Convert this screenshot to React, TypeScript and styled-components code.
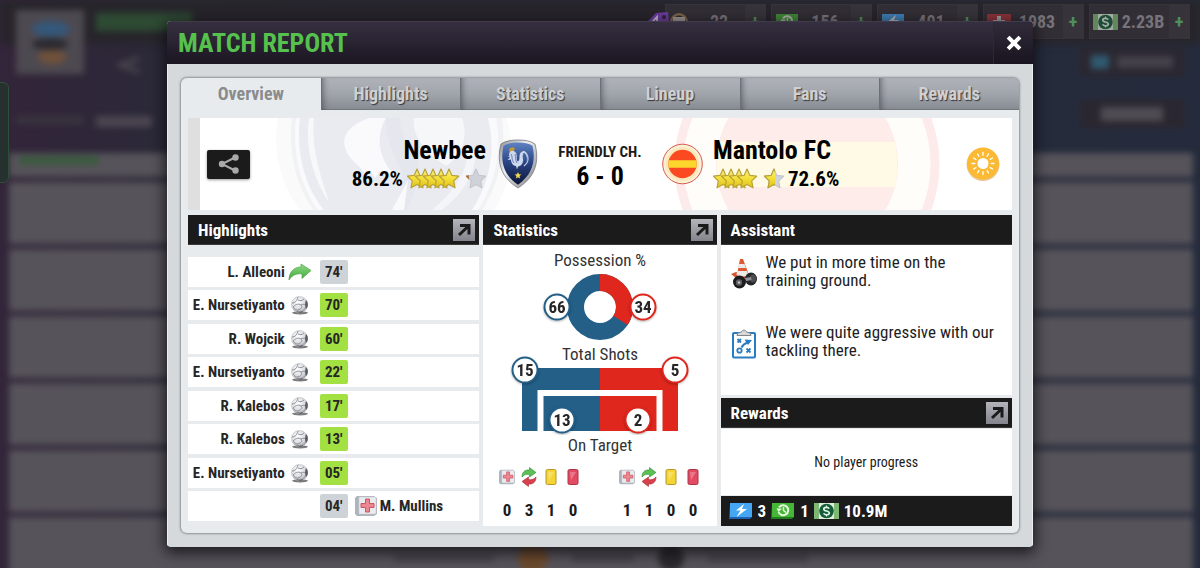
import React from "react";
import styled, { createGlobalStyle, css } from "styled-components";

const GlobalStyle = createGlobalStyle`
  *, *::before, *::after { box-sizing: border-box; }
  body {
    margin: 0;
    background: #26232c;
    color: #1b1b1b;
    font-family: "Roboto Condensed", Roboto, "Liberation Sans", sans-serif;
    font-size: 15px;
  }
  button { font: inherit; border: 0; padding: 0; cursor: pointer; }
  h1, h2, h3, p, ul, ol, dl, dd, dt { margin: 0; padding: 0; }
  ul, ol { list-style: none; }
  svg { display: block; flex: none; }
`;

/* ---------- page behind the dialog ---------- */

const Page = styled.div`
  position: relative;
  min-height: 100vh;
  overflow: hidden;
`;

const Backdrop = styled.div`
  position: absolute;
  inset: 0;
  overflow: hidden;
  background: linear-gradient(90deg, #33253a 0, #2b2938 14%, #272a3a 60%, #252b3c 100%);
`;

const BlurLayer = styled.div`
  filter: blur(3px);
  display: flex;
  flex-direction: column;
`;

const BackHeader = styled.div`
  height: 153px;
  padding: 10px 16px 0;
  display: flex;
  justify-content: space-between;
  background: linear-gradient(180deg, #27252b 0, #27252b 40px, transparent 48px);
`;

const BackClub = styled.div`
  display: grid;
  grid-template-columns: 68px 100px;
  grid-template-rows: 64px auto;
  gap: 42px 12px;
`;

const BackLogo = styled.div`
  display: grid;
  place-items: center;
  background: #4d4950;
`;

const BackLines = styled.div`
  display: flex;
  flex-direction: column;
  gap: 26px;
  padding-top: 3px;
`;

const BackArrow = styled.svg`
  margin-left: 18px;
`;

const Smudge = styled.span<{ $w: number; $h: number; $c: string; $round?: boolean }>`
  display: block;
  width: ${(p) => p.$w}px;
  height: ${(p) => p.$h}px;
  border-radius: ${(p) => (p.$round ? "50%" : "0")};
  background: ${(p) => p.$c};
`;

const BackActions = styled.div`
  display: flex;
  flex-direction: column;
  gap: 24px;
  padding-top: 38px;
`;

const BackAction = styled.div`
  width: 104px;
  height: 28px;
  display: flex;
  align-items: center;
  justify-content: center;
  gap: 8px;
  background: #2b2730;
`;

const BackRows = styled.div`
  display: flex;
  flex-direction: column;
  gap: 5px;
  padding: 0 7px 0 9px;
`;

const BackRow = styled.div<{ $short?: boolean }>`
  height: ${(p) => (p.$short ? 24 : 62)}px;
  padding: 3px 10px;
  background: #56535a;
`;

const BackScoreRow = styled(BackRow)`
  display: flex;
  align-items: center;
  justify-content: center;
  gap: 24px;
  padding-top: 22px;
`;

const SideHandle = styled.div`
  position: absolute;
  left: -8px;
  top: 82px;
  width: 17px;
  height: 101px;
  border: 1px solid #2f5038;
  border-radius: 6px;
  background: #26302e;
`;

const Wallet = styled.ul`
  position: absolute;
  top: 4px;
  right: 10px;
  display: flex;
  gap: 5px;
`;

const WalletItem = styled.li`
  position: relative;
  width: 101px;
  height: 35px;
  display: flex;
  align-items: center;
  background: #322e35;
  color: #77737a;
  font-size: 18px;
  font-weight: 700;
  border: 1px solid #37333a;
`;

const WalletIcon = styled.span`
  width: 24px;
  margin-left: 3px;
  opacity: 0.65;
`;

const WalletTag = styled.span`
  position: absolute;
  left: -22px;
  top: 5px;
`;

const WalletValue = styled.span`
  flex: 1;
  text-align: center;
`;

const WalletAdd = styled.button`
  width: 20px;
  height: 33px;
  background: #37333a;
  color: #4f8f5e;
  font-size: 18px;
  font-weight: 700;
`;

/* ---------- dialog ---------- */

const Overlay = styled.div`
  position: relative;
  display: flex;
  justify-content: center;
  padding: 21px 16px 22px;
`;

const Dialog = styled.section`
  width: 100%;
  max-width: 866px;
  border-radius: 4px;
  background: #d5d9dc;
  box-shadow: 0 4px 14px 2px rgba(10, 8, 14, 0.75);
  overflow: hidden;
`;

const TitleBar = styled.header`
  height: 43px;
  padding-left: 11px;
  display: flex;
  align-items: center;
  justify-content: space-between;
  background: linear-gradient(180deg, #352f3f 0, #2a2433 45%, #1c1623 100%);
  border-top: 1px solid #403a4a;
`;

const Title = styled.h1`
  color: #56c14c;
  font-size: 26px;
  line-height: 42px;
  font-weight: 700;
`;

const CloseButton = styled.button`
  width: 40px;
  height: 42px;
  display: grid;
  place-items: center;
  background: rgba(0, 0, 0, 0.08);
  border-left: 1px solid #2d2736;
`;

const DialogBody = styled.div`
  padding: 14px;
  box-shadow: inset 1px 0 #eceff1, inset -1px 0 #eceff1;
`;

const Panel = styled.div`
  border-radius: 6px;
  background: #e8ebed;
  box-shadow: 0 0 2px 1px rgba(110, 115, 122, 0.7);
  overflow: hidden;
`;

const Tabs = styled.div`
  display: flex;
  background: #8b8f96;
`;

const Tab = styled.button<{ $active?: boolean }>`
  flex: 1;
  height: 32px;
  font-size: 18px;
  line-height: 32px;
  font-weight: 700;
  ${(p) =>
    p.$active
      ? css`
          background: #e8ebed;
          color: #8a8b8d;
        `
      : css`
          background: linear-gradient(180deg, #b0b3ba 0, #a0a4ab 50%, #868a91 100%);
          color: #cfd0d2;
          text-shadow: 1px 1px 1px #35373b;
          box-shadow: inset 1px 0 #6c7077, inset 7px 0 6px -5px rgba(40, 42, 48, 0.55),
            inset 0 -1px #777b82;
        `}
`;

const PanelContent = styled.div`
  padding: 8px 7px 7px;
  display: flex;
  flex-direction: column;
  gap: 5px;
`;

const Hero = styled.div`
  position: relative;
  height: 92px;
  padding: 0 12px 0 7px;
  display: grid;
  grid-template-columns: 43px minmax(0, 1fr) auto minmax(0, 1fr) 50px;
  align-items: center;
  border-left: 12px solid #dfdfdf;
  background: #fff;
`;

const HeroArt = styled.svg`
  position: absolute;
  inset: 0;
  width: 100%;
  height: 100%;
`;

const ShareButton = styled.button`
  position: relative;
  height: 29px;
  display: grid;
  place-items: center;
  border-radius: 2px;
  background: #1b1b1b;
  box-shadow: 0 1px 3px rgba(0, 0, 0, 0.4);
`;

const Team = styled.div<{ $away?: boolean }>`
  position: relative;
  display: flex;
  align-items: center;
  flex-direction: ${(p) => (p.$away ? "row-reverse" : "row")};
  justify-content: flex-end;
  gap: ${(p) => (p.$away ? 10 : 12)}px;
`;

const TeamText = styled.div<{ $away?: boolean }>`
  display: flex;
  flex-direction: column;
  align-items: ${(p) => (p.$away ? "flex-start" : "flex-end")};
`;

const TeamName = styled.h2`
  color: #000;
  font-size: 26px;
  line-height: 30px;
  font-weight: 700;
  white-space: nowrap;
`;

const Rating = styled.div`
  display: flex;
  align-items: center;
  gap: 4px;
  height: 28px;
  color: #000;
  font-size: 21px;
  font-weight: 700;
`;

const Score = styled.div`
  position: relative;
  min-width: 84px;
  margin: 0 20px;
  text-align: center;
  font-weight: 700;
  line-height: 24px;
`;

const Competition = styled.p`
  font-size: 15px;
`;

const Result = styled.p`
  color: #000;
  font-size: 26px;
`;

const Weather = styled.div`
  position: relative;
  justify-self: end;
`;

const Columns = styled.div`
  display: grid;
  grid-template-columns: minmax(0, 5fr) minmax(0, 4fr) minmax(0, 5fr);
  gap: 4px;
`;

const Column = styled.section`
  display: flex;
  flex-direction: column;
`;

const SectionHead = styled.header`
  height: 30px;
  padding: 0 4px 0 10px;
  display: flex;
  align-items: center;
  justify-content: space-between;
  background: #1b1b1b;
  border-bottom: 1px solid #3a3a3a;
`;

const SectionTitle = styled.h3`
  color: #fff;
  font-size: 17px;
  font-weight: 700;
`;

const OpenButton = styled.button`
  width: 22px;
  height: 22px;
  display: grid;
  place-items: center;
  background: linear-gradient(180deg, #b4b5bb, #84858c);
`;

const EventList = styled.ol`
  height: 264px;
  margin: 12px 0 4px;
  display: flex;
  flex-direction: column;
  justify-content: space-between;
`;

const EventRow = styled.li`
  height: 30px;
  display: grid;
  grid-template-columns: minmax(0, 1fr) 28px minmax(0, 1fr);
  align-items: center;
  gap: 7px;
  background: #fff;
  font-weight: 700;
  color: #262626;
  white-space: nowrap;
`;

const EventSide = styled.div<{ $end?: boolean }>`
  display: flex;
  align-items: center;
  justify-content: ${(p) => (p.$end ? "flex-end" : "flex-start")};
  gap: 3px;
`;

const Minute = styled.span<{ $goal?: boolean }>`
  height: 24px;
  line-height: 24px;
  text-align: center;
  border-radius: 2px;
  background: ${(p) => (p.$goal ? "#a3e041" : "#ced3d7")};
`;

const StatsBody = styled.div`
  flex: 1;
  padding-top: 5px;
  display: flex;
  flex-direction: column;
  align-items: center;
  background: #fff;
`;

const StatLabel = styled.h4`
  margin: 0;
  font-size: 17px;
  line-height: 20px;
  font-weight: 400;
  color: #333;
`;

const Donut = styled.svg`
  margin: 2px 0;
`;

const Goal = styled.svg`
  margin-top: -8px;
`;

const CountGroups = styled.div`
  margin-top: 12px;
  display: flex;
  gap: 32px;
`;

const CountGroup = styled.dl`
  display: grid;
  grid-template-columns: repeat(4, 22px);
`;

const Count = styled.div`
  display: flex;
  flex-direction: column;
  align-items: center;
  gap: 13px;
  font-size: 17px;
  line-height: 20px;
  font-weight: 700;
`;

const CountIcon = styled.dt`
  height: 20px;
  display: grid;
  place-items: center;
`;

const NoteList = styled.ul`
  height: 150px;
  padding: 8px 15px 0 10px;
  display: flex;
  flex-direction: column;
  gap: 34px;
  background: #fff;
`;

const Note = styled.li`
  display: flex;
  gap: 9px;
  align-items: flex-start;
`;

const NoteIcon = styled.span`
  width: 26px;
  padding-top: 6px;
`;

const NoteText = styled.p`
  flex: 1;
  font-size: 17px;
  line-height: 18px;
  color: #1d1d1d;
`;

const RewardsSection = styled.section`
  margin-top: 3px;
  display: flex;
  flex-direction: column;
`;

const Progress = styled.p`
  height: 66px;
  font-size: 14px;
  line-height: 66px;
  margin: 1px 0;
  text-align: center;
  background: #fff;
`;

const Earnings = styled.ul`
  height: 30px;
  padding: 0 8px;
  display: flex;
  align-items: center;
  gap: 5px;
  background: #1b1b1b;
  color: #fff;
  font-size: 17px;
  font-weight: 700;
`;

const Earning = styled.li`
  display: flex;
  align-items: center;
  gap: 5px;
`;

/* ---------- drawings ---------- */

const STAR =
  "M10 1 L12.9 7.4 L19.6 8.2 L14.7 12.9 L16 19.8 L10 16.4 L4 19.8 L5.3 12.9 L0.4 8.2 L7.1 7.4 Z";

function Stars({ full, rest }: { full: number; rest: number }) {
  const last = full * 8 + 19;
  const id = `rest${full}`;
  return (
    <svg width={last + 20} height="22" viewBox={`0 0 ${last + 20} 22`} aria-hidden="true">
      <defs>
        <linearGradient id={`${id}g`} x1="0" y1="0" x2="0" y2="1">
          <stop offset="0" stopColor="#f0ee9a" />
          <stop offset="0.45" stopColor="#f6e23c" />
          <stop offset="1" stopColor="#e0c01c" />
        </linearGradient>
        <clipPath id={id}>
          <rect x="0" y="0" width={20 * rest} height="22" />
        </clipPath>
      </defs>
      {Array.from({ length: full }, (_, i) => (
        <path
          key={i}
          d={STAR}
          transform={`translate(${i * 8} 0)`}
          fill={`url(#${id}g)`}
          stroke="#b9a236"
          strokeWidth="1.2"
          strokeLinejoin="round"
        />
      ))}
      <g transform={`translate(${last} 0)`}>
        <path d={STAR} fill="#d0d2da" stroke="#c4c6ce" strokeWidth="1.2" strokeLinejoin="round" />
        <path
          d={STAR}
          fill={rest > 0.3 ? `url(#${id}g)` : "#b98a4e"}
          stroke={rest > 0.3 ? "#b9a236" : "#a9743e"}
          strokeWidth="1.2"
          strokeLinejoin="round"
          clipPath={`url(#${id})`}
        />
      </g>
    </svg>
  );
}

const Shield = () => (
  <svg width="40" height="50" viewBox="0 0 40 50" role="img" aria-label="Newbee crest">
    <defs>
      <linearGradient id="shieldRim" x1="0" y1="0" x2="1" y2="1">
        <stop offset="0" stopColor="#8b8d93" />
        <stop offset="0.4" stopColor="#eeeff1" />
        <stop offset="1" stopColor="#77797f" />
      </linearGradient>
      <linearGradient id="shieldFill" x1="0" y1="0" x2="0" y2="1">
        <stop offset="0" stopColor="#5f82c2" />
        <stop offset="0.45" stopColor="#2c4788" />
        <stop offset="1" stopColor="#0b1438" />
      </linearGradient>
    </defs>
    <path
      d="M20 1c7 0 13 1 17 4 4 16 2 32-17 44C1 37-1 21 3 5 7 2 13 1 20 1z"
      fill="url(#shieldRim)"
      stroke="#77797f"
      strokeWidth="0.8"
    />
    <path
      d="M20 3.500c6 0 11 1 14.500 3.200 3 13 1.500 28-14.500 39C4 35 2.500 20 5.500 6.700 9 4.500 14 3.500 20 3.500z"
      fill="url(#shieldFill)"
    />
    <path d="M11 12c0-3 2-4 4-3.500 2-.5 2 1.500 1 3l-3 2z" fill="#c79a2d" />
    <path
      d="M11 15c1-4 5-4 7-1 1.500 3 0 6 1.500 8 1 1 2-1 2-4 0-4 2-6 5-6 3 2 4 7 2 11 1-4 0-7-2-9-2 1-2 3-1.500 6 .5 4-1.500 7-5 7.500l-1 3-1-3.500c-3 0-5-3-5-6.500l-3.500.5 2.500-2.500-2-1 2-.5c-1 0-1-1-1-2z"
      fill="#cfd9ec"
    />
    <path d="M13 15c2 3 0 5 3 9M17 15c1 3 0 6 2 9M25 14c1 3 2 5 0 9" stroke="#4d69a8" strokeWidth="0.8" fill="none" />
    <path d="M28 14c3 4 3 9-2 13" stroke="#b9c7e2" strokeWidth="1.300" fill="none" />
    <path
      d="M20 33l1 2.300 2.400.2-1.900 1.600.7 2.400-2.200-1.300-2.200 1.300.7-2.400-1.900-1.600 2.400-.2z"
      fill="#f5da4a"
    />
  </svg>
);

const RoundCrest = () => (
  <svg width="41" height="42" viewBox="0 0 41 42" role="img" aria-label="Mantolo FC crest">
    <circle cx="20.500" cy="21" r="19.800" fill="#fbf0d3" stroke="#d8584e" strokeWidth="1" />
    <circle cx="20.500" cy="21" r="17" fill="#f9e8bc" />
    <circle cx="20.500" cy="21" r="14.200" fill="#fb4a22" />
    <path d="M6.800 17.300h27.400a14.200 14.200 0 0 1 0 7.400H6.800a14.200 14.200 0 0 1 0-7.400z" fill="#fcd62c" />
  </svg>
);

const HeroBackground = () => (
  <HeroArt viewBox="0 0 812 92" preserveAspectRatio="xMidYMid slice" aria-hidden="true">
    <path d="M78 0C72 34 82 70 100 92H294C312 66 316 26 306 0Z" fill="#fafafb" />
    <path d="M92 0C88 34 96 70 114 92H282C300 64 306 32 302 0Z" fill="#f1f2f4" />
    <path d="M96 0C92 34 100 68 118 92H278C296 64 302 32 296 0Z" fill="#fafafc" />
    <path d="M100 0C96 34 104 68 124 92H272C290 64 296 32 288 0Z" fill="#e9ebf0" />
    <path d="M114 0h-5c-4 30 4 60 20 84-8-26-18-52-15-84z" fill="#f8f8fa" />
    <path
      d="M170 0C150 6 140 18 146 32C150 44 162 48 166 58L170 52L175 60L180 53L196 58C180 44 174 20 186 0Z"
      fill="#fafafc"
    />
    <path d="M214 0C212 16 222 32 246 48C264 36 268 16 262 0Z" fill="#f6f7f9" />
    <path d="M186 0c0 20 6 34 14 50 6 14 4 28-2 42h8c12-22 18-40 8-56-10-14-14-24-14-36z" fill="#e4e7ed" />
    <path d="M192 92l16-30-4 30z" fill="#fafafc" />
    <path d="M268 30c0 24-14 44-36 62h10c22-18 34-36 34-62z" fill="#f4f5f8" />
    <circle cx="607" cy="46" r="128" fill="#fffdf9" stroke="#fdeaea" strokeWidth="9" />
    <circle cx="607" cy="46" r="91" fill="#fdece9" />
    <path d="M519 24h176c3 15 3 30 0 45H519c-3-15-3-30 0-45z" fill="#fffae5" />
  </HeroArt>
);

const CloseIcon = () => (
  <svg width="16" height="16" viewBox="0 0 16 16" aria-hidden="true">
    <path d="M3.500 3.500l9 9M12.500 3.500l-9 9" stroke="#fff" strokeWidth="4" strokeLinecap="square" />
  </svg>
);

const ShareIcon = () => (
  <svg width="22" height="20" viewBox="0 0 22 20" aria-hidden="true">
    <path d="M17 3.500L4 10l13 6.500" fill="none" stroke="#aaa" strokeWidth="2" />
    <circle cx="17.500" cy="3.500" r="3.200" fill="#aaa" />
    <circle cx="4" cy="10" r="3.200" fill="#aaa" />
    <circle cx="17.500" cy="16.500" r="3.200" fill="#aaa" />
  </svg>
);

const SunIcon = () => (
  <svg width="34" height="34" viewBox="0 0 34 34" role="img" aria-label="Sunny">
    <circle cx="17" cy="17.500" r="16.500" fill="#d8a24a" opacity="0.6" />
    <circle cx="17" cy="16.500" r="16" fill="#fbb934" />
    <circle cx="17" cy="16.500" r="5.500" fill="#fff" />
    {Array.from({ length: 12 }, (_, i) => (
      <path
        key={i}
        d="M17 5.500v2.800"
        stroke="#fff"
        strokeWidth="1.300"
        strokeLinecap="round"
        transform={`rotate(${i * 30} 17 16.500)`}
      />
    ))}
  </svg>
);

const OpenIcon = () => (
  <svg width="14" height="14" viewBox="0 0 14 14" aria-hidden="true">
    <path d="M3 2.500h9v9M11 3.500L2 12" fill="none" stroke="#1b1b1b" strokeWidth="3" />
  </svg>
);

const BallIcon = () => (
  <svg width="25" height="20" viewBox="0 0 25 20" role="img" aria-label="Goal">
    <defs>
      <radialGradient id="ballFill" cx="0.4" cy="0.35" r="0.7">
        <stop offset="0" stopColor="#ffffff" />
        <stop offset="0.7" stopColor="#d5d7dc" />
        <stop offset="1" stopColor="#85878e" />
      </radialGradient>
    </defs>
    <ellipse cx="12" cy="17.800" rx="8" ry="1.600" fill="#444" opacity="0.7" />
    <circle cx="11.500" cy="9.500" r="8" fill="url(#ballFill)" stroke="#b5b7be" strokeWidth="0.6" />
    <path
      d="M4 8c3 0 5-2 6-6M10 5c2 1 4 1 6-1M5 12c2-2 5-4 8-2 2 2 0 4-3 5-2 0-4-1-5-3zM13 10c2-1 4-1 5 0"
      fill="none"
      stroke="#84868e"
      strokeWidth="0.9"
    />
    <path d="M18 5c2.500 2 2.500 7 0 9-1.200-3-1.200-6 0-9z" fill="#5a5c64" />
    <path d="M8 16c2 1 5 1 7 0l-1 1.400c-2 .5-4 .4-6-1.400z" fill="#55575e" />
  </svg>
);

const SubIcon = () => (
  <svg width="25" height="20" viewBox="0 0 25 20" role="img" aria-label="Substitution">
    <defs>
      <linearGradient id="subFill" x1="0" y1="0" x2="0" y2="1">
        <stop offset="0" stopColor="#8fdc84" />
        <stop offset="1" stopColor="#3fa63c" />
      </linearGradient>
    </defs>
    <path
      d="M1 18C1 10 6 5 13 5V2l10 6.500-9 8V12C9 11 4 13 1 18z"
      fill="url(#subFill)"
      stroke="#4fa548"
      strokeWidth="0.7"
    />
  </svg>
);

const KitIcon = ({ size }: { size: number }) => (
  <svg width={size} height={size} viewBox="0 0 22 22" role="img" aria-label="Injury">
    <path d="M2 1h17l3 2v16l-3 2H2l-2-2V3z" fill="#aeb4bd" />
    <path d="M4 2h16l1 1v15l-1 1H4z" fill="#e9ebef" stroke="#c9ccd3" strokeWidth="0.6" />
    <path d="M10.500 4h4v4.500H19v4h-4.500V17h-4v-4.500H6v-4h4.500z" fill="#ea8790" stroke="#d4525e" />
  </svg>
);

const SwapIcon = () => (
  <svg width="16" height="20" viewBox="0 0 16 20" role="img" aria-label="Substitutions">
    <path d="M1 10c0-5 3-7.500 7.500-7V.5L15 5.500 8.500 10V7.500C5.500 7 3 7.500 1 10z" fill="#5cc056" stroke="#2f8a33" strokeWidth="0.6" />
    <path d="M15 10c0 5-3 7.500-7.500 7v2.500L1 14.500 7.500 10v2.500c3 .5 5.500 0 7.500-2.500z" fill="#d8404b" stroke="#a52934" strokeWidth="0.6" />
  </svg>
);

const CardIcon = ({ red }: { red?: boolean }) => (
  <svg width="12" height="16" viewBox="0 0 12 16" role="img" aria-label={red ? "Red cards" : "Yellow cards"}>
    <rect x="1" y="0.500" width="10" height="15" rx="1.500" fill={red ? "#e24a62" : "#f4d534"} stroke={red ? "#ab3346" : "#b4962a"} />
    <path d="M3 3h6L4 11z" fill="#fff" opacity="0.25" />
  </svg>
);

const BoltIcon = () => (
  <svg width="24" height="16" viewBox="0 0 24 16" role="img" aria-label="Condition">
    <path d="M1 1h22v13l-2 2H0z" fill="#1f62b4" />
    <rect x="1" y="0" width="22" height="14" fill="#45a7f4" />
    <path d="M15 1L7 7.500h4.500L7.500 14 18 6h-5z" fill="#fff" />
  </svg>
);

const RestIcon = () => (
  <svg width="24" height="16" viewBox="0 0 24 16" role="img" aria-label="Rest">
    <path d="M1 1h22v13l-2 2H0z" fill="#1f7f1c" />
    <rect x="1" y="0" width="22" height="14" fill="#46b636" />
    <path d="M8 4.500a5 5 0 1 1-.5 4.500" fill="none" stroke="#e9f8e4" strokeWidth="2" />
    <path d="M5.500 5.500h5.500L7.500 9z" fill="#e9f8e4" />
    <path d="M12.500 4v3.500l2.500 2" fill="none" stroke="#e9f8e4" strokeWidth="1.500" />
  </svg>
);

const CashIcon = () => (
  <svg width="25" height="16" viewBox="0 0 25 16" role="img" aria-label="Cash">
    <rect width="25" height="16" fill="#7fb873" />
    <rect x="5" width="15" height="16" fill="#dfeed8" />
    <circle cx="12.500" cy="8" r="7.300" fill="#135c3c" />
    <path
      d="M15.200 5.600C14 3.800 9.800 4 9.800 6.200c0 2.300 5.500 1.400 5.500 3.800 0 2.200-4.500 2.400-5.700.4"
      fill="none"
      stroke="#e4f3e2"
      strokeWidth="1.700"
    />
    <path d="M12.500 2.500v2M12.500 11.500v2" stroke="#e4f3e2" strokeWidth="1.200" />
  </svg>
);

const MedIcon = () => (
  <svg width="24" height="16" viewBox="0 0 24 16" role="img" aria-label="Treatments">
    <rect width="24" height="16" rx="1" fill="#b8353c" />
    <path d="M10 2h4v4h4v4h-4v4h-4v-4H6V6h4z" fill="#d9d5d8" />
  </svg>
);

const CoinIcon = () => (
  <svg width="20" height="20" viewBox="0 0 20 20" role="img" aria-label="Tokens">
    <circle cx="10" cy="10" r="9" fill="#9c8057" />
    <circle cx="10" cy="10" r="6.500" fill="#33271f" />
    <path d="M4 5h12v4H4z" fill="#d3cdc6" />
  </svg>
);

const TagIcon = () => (
  <svg width="26" height="22" viewBox="0 0 26 22" aria-hidden="true">
    <path d="M0 15L12 3l12-1 1 9-10 9z" fill="#6b3b9c" />
    <circle cx="20" cy="7" r="2" fill="#2c2433" />
    <path d="M13 15V7l-5 5h7" fill="none" stroke="#c2b5d0" strokeWidth="1.800" />
  </svg>
);

const ConeIcon = () => (
  <svg width="26" height="30" viewBox="0 0 26 30" aria-hidden="true">
    <path d="M0 15l5-2 14 2-3 5-11-1z" fill="#d9532b" />
    <path d="M9 0h3l6 16c-4 2-8 2-12 0z" fill="#e0582f" />
    <path d="M8 5h5.500l1.500 4H6.800zM6 12h10l1.500 4c-4 2-8 2-12 0z" fill="#ece9e6" />
    <ellipse cx="20" cy="20" rx="6" ry="6.500" fill="#262628" />
    <ellipse cx="22" cy="19.500" rx="3" ry="4" fill="#4c4d50" />
    <path d="M8 20l12-2 .5 3-12 2.500z" fill="#8f9196" />
    <circle cx="8.500" cy="23" r="6.500" fill="#1c1c1e" />
    <circle cx="8" cy="23.500" r="3.200" fill="#5c5d61" />
    <circle cx="8" cy="23.500" r="1.300" fill="#bfc0c3" />
  </svg>
);

const TacticsIcon = () => (
  <svg width="26" height="30" viewBox="0 0 26 30" aria-hidden="true">
    <rect x="2" y="4" width="22" height="24.500" rx="1" fill="#fff" stroke="#2a7cc0" strokeWidth="2" />
    <path d="M6 6.500c0-3 3-3 4.500-3.500C11 .5 15 .5 15.500 3 17 3.500 20 3.500 20 6.500z" fill="#d7d8da" stroke="#77797d" strokeWidth="0.900" />
    <path d="M6.500 10l3.500 3.500M10 10l-3.500 3.500M15.500 19.500l4 4M19.500 19.500l-4 4" stroke="#2a7cc0" strokeWidth="1.800" />
    <circle cx="8.500" cy="21.500" r="2.200" fill="none" stroke="#2a7cc0" strokeWidth="1.800" />
    <path d="M10.500 18.500c1-2 3-4 6-5" fill="none" stroke="#2a7cc0" strokeWidth="2" />
    <path d="M13.500 10.500l7.500.5-4 5z" fill="#2a7cc0" />
  </svg>
);

const BLUE = "#235f87";
const RED = "#df271d";

const ChartBadge = ({ x, y, value, color }: { x: number; y: number; value: number; color: string }) => (
  <g filter="drop-shadow(0 1px 1px rgba(0,0,0,0.3))">
    <circle cx={x} cy={y} r="12.500" fill="#fff" stroke={color} strokeWidth="2" />
    <text x={x} y={y + 6} textAnchor="middle" fontSize="17" fontWeight="700" fill="#262626">
      {value}
    </text>
  </g>
);

function PossessionChart({ home, away }: { home: number; away: number }) {
  const circumference = 2 * Math.PI * 24.5;
  const awayLength = (circumference * away) / (home + away);
  return (
    <Donut width="116" height="70" viewBox="0 0 116 70" role="img" aria-label="Possession">
      <circle cx="58" cy="35" r="24.500" fill="none" stroke={BLUE} strokeWidth="17" />
      <circle
        cx="58"
        cy="35"
        r="24.500"
        fill="none"
        stroke={RED}
        strokeWidth="17"
        strokeDasharray={`${awayLength} ${circumference}`}
        transform="rotate(-90 58 35)"
      />
      <ChartBadge x={15} y={35} value={home} color={BLUE} />
      <ChartBadge x={101} y={35} value={away} color={RED} />
    </Donut>
  );
}

const ShotsChart = () => (
  <Goal width="180" height="79" viewBox="0 0 180 79" role="img" aria-label="Shots">
    <path d="M12 12h78v63H12z" fill={BLUE} />
    <path d="M90 12h78v63H90z" fill={RED} />
    <path d="M30.500 75V37h119v38" fill="none" stroke="#fff" strokeWidth="6" />
    <ChartBadge x={15} y={14} value={15} color={BLUE} />
    <ChartBadge x={165} y={14} value={5} color={RED} />
    <ChartBadge x={52} y={64} value={13} color={BLUE} />
    <ChartBadge x={128} y={64} value={2} color={RED} />
  </Goal>
);

/* ---------- data ---------- */

type MatchEvent = { minute: string; player: string; kind: "goal" | "sub" | "injury"; away?: boolean };

const EVENTS: MatchEvent[] = [
  { minute: "74'", player: "L. Alleoni", kind: "sub" },
  { minute: "70'", player: "E. Nursetiyanto", kind: "goal" },
  { minute: "60'", player: "R. Wojcik", kind: "goal" },
  { minute: "22'", player: "E. Nursetiyanto", kind: "goal" },
  { minute: "17'", player: "R. Kalebos", kind: "goal" },
  { minute: "13'", player: "R. Kalebos", kind: "goal" },
  { minute: "05'", player: "E. Nursetiyanto", kind: "goal" },
  { minute: "04'", player: "M. Mullins", kind: "injury", away: true },
];

const EVENT_ICONS = {
  goal: <BallIcon />,
  sub: <SubIcon />,
  injury: <KitIcon size={22} />,
};

const TABS = ["Overview", "Highlights", "Statistics", "Lineup", "Fans", "Rewards"];

const WALLET = [
  { icon: <CoinIcon />, value: "22", tag: true },
  { icon: <RestIcon />, value: "156" },
  { icon: <BoltIcon />, value: "401" },
  { icon: <MedIcon />, value: "1983" },
  { icon: <CashIcon />, value: "2.23B" },
];

const COUNTS = [
  [0, 3, 1, 0],
  [1, 1, 0, 0],
];

const COUNT_ICONS = [<KitIcon size={16} />, <SwapIcon />, <CardIcon />, <CardIcon red />];

function OpenSection({ label }: { label: string }) {
  return (
    <OpenButton type="button" aria-label={`Open ${label}`}>
      <OpenIcon />
    </OpenButton>
  );
}

export default function App() {
  return (
    <Page>
      <GlobalStyle />
      <Backdrop>
        <BlurLayer>
          <BackHeader>
            <BackClub>
              <BackLogo>
                <svg width="44" height="50" viewBox="0 0 44 50" aria-hidden="true">
                  <ellipse cx="23" cy="12" rx="19" ry="8" fill="#35577a" />
                  <ellipse cx="22" cy="27" rx="18" ry="6" fill="#2b2a30" />
                  <ellipse cx="24" cy="40" rx="14" ry="7" fill="#70513a" />
                </svg>
              </BackLogo>
              <BackLines>
                <Smudge $w={96} $h={18} $c="#2d4a33" />
                <BackArrow width="28" height="16" viewBox="0 0 28 16" aria-hidden="true">
                  <path d="M26 1L6 8l20 7" fill="none" stroke="#4a464e" strokeWidth="4" />
                </BackArrow>
              </BackLines>
              <Smudge $w={68} $h={8} $c="#39343f" />
              <Smudge $w={56} $h={11} $c="#4b4650" />
            </BackClub>
            <BackActions>
              <BackAction>
                <Smudge $w={18} $h={14} $c="#2f5a70" />
                <Smudge $w={56} $h={12} $c="#45414a" />
              </BackAction>
              <BackAction>
                <Smudge $w={62} $h={14} $c="#504c54" />
              </BackAction>
            </BackActions>
          </BackHeader>
          <BackRows>
            <BackRow $short>
              <Smudge $w={80} $h={9} $c="#3b5a3f" />
            </BackRow>
            <BackRow />
            <BackRow />
            <BackRow />
            <BackRow />
            <BackRow />
            <BackScoreRow>
              <Smudge $w={100} $h={8} $c="#47444b" />
              <Smudge $w={30} $h={30} $c="#6b4a2c" $round />
              <Smudge $w={62} $h={8} $c="#47444b" />
              <Smudge $w={26} $h={26} $c="#2b282e" $round />
              <Smudge $w={100} $h={8} $c="#47444b" />
            </BackScoreRow>
          </BackRows>
        </BlurLayer>
        <SideHandle />
        <Wallet>
          {WALLET.map((w) => (
            <WalletItem key={w.value}>
              {w.tag && (
                <WalletTag>
                  <TagIcon />
                </WalletTag>
              )}
              <WalletIcon>{w.icon}</WalletIcon>
              <WalletValue>{w.value}</WalletValue>
              <WalletAdd type="button" aria-label="Add">
                +
              </WalletAdd>
            </WalletItem>
          ))}
        </Wallet>
      </Backdrop>

      <Overlay>
        <Dialog role="dialog" aria-labelledby="report-title">
          <TitleBar>
            <Title id="report-title">MATCH REPORT</Title>
            <CloseButton type="button" aria-label="Close">
              <CloseIcon />
            </CloseButton>
          </TitleBar>
          <DialogBody>
            <Panel>
              <Tabs role="tablist">
                {TABS.map((t, i) => (
                  <Tab key={t} type="button" role="tab" aria-selected={i === 0} $active={i === 0}>
                    {t}
                  </Tab>
                ))}
              </Tabs>
              <PanelContent>
                <Hero>
                  <HeroBackground />
                  <ShareButton type="button" aria-label="Share">
                    <ShareIcon />
                  </ShareButton>
                  <Team>
                    <TeamText>
                      <TeamName>Newbee</TeamName>
                      <Rating>
                        86.2%
                        <Stars full={5} rest={0.15} />
                      </Rating>
                    </TeamText>
                    <Shield />
                  </Team>
                  <Score>
                    <Competition>FRIENDLY CH.</Competition>
                    <Result>6 - 0</Result>
                  </Score>
                  <Team $away>
                    <TeamText $away>
                      <TeamName>Mantolo FC</TeamName>
                      <Rating>
                        <Stars full={4} rest={0.55} />
                        72.6%
                      </Rating>
                    </TeamText>
                    <RoundCrest />
                  </Team>
                  <Weather>
                    <SunIcon />
                  </Weather>
                </Hero>

                <Columns>
                  <Column>
                    <SectionHead>
                      <SectionTitle>Highlights</SectionTitle>
                      <OpenSection label="highlights" />
                    </SectionHead>
                    <EventList>
                      {EVENTS.map((e) => (
                        <EventRow key={e.minute}>
                          <EventSide $end>
                            {!e.away && (
                              <>
                                {e.player}
                                {EVENT_ICONS[e.kind]}
                              </>
                            )}
                          </EventSide>
                          <Minute $goal={e.kind === "goal"}>{e.minute}</Minute>
                          <EventSide>
                            {e.away && (
                              <>
                                {EVENT_ICONS[e.kind]}
                                {e.player}
                              </>
                            )}
                          </EventSide>
                        </EventRow>
                      ))}
                    </EventList>
                  </Column>

                  <Column>
                    <SectionHead>
                      <SectionTitle>Statistics</SectionTitle>
                      <OpenSection label="statistics" />
                    </SectionHead>
                    <StatsBody>
                      <StatLabel>Possession %</StatLabel>
                      <PossessionChart home={66} away={34} />
                      <StatLabel>Total Shots</StatLabel>
                      <ShotsChart />
                      <StatLabel>On Target</StatLabel>
                      <CountGroups>
                        {COUNTS.map((group, g) => (
                          <CountGroup key={g}>
                            {group.map((n, i) => (
                              <Count key={i}>
                                <CountIcon>{COUNT_ICONS[i]}</CountIcon>
                                <dd>{n}</dd>
                              </Count>
                            ))}
                          </CountGroup>
                        ))}
                      </CountGroups>
                    </StatsBody>
                  </Column>

                  <Column>
                    <SectionHead>
                      <SectionTitle>Assistant</SectionTitle>
                    </SectionHead>
                    <NoteList>
                      <Note>
                        <NoteIcon>
                          <ConeIcon />
                        </NoteIcon>
                        <NoteText>We put in more time on the training ground.</NoteText>
                      </Note>
                      <Note>
                        <NoteIcon>
                          <TacticsIcon />
                        </NoteIcon>
                        <NoteText>We were quite aggressive with our tackling there.</NoteText>
                      </Note>
                    </NoteList>
                    <RewardsSection>
                      <SectionHead>
                        <SectionTitle>Rewards</SectionTitle>
                        <OpenSection label="rewards" />
                      </SectionHead>
                      <Progress>No player progress</Progress>
                      <Earnings>
                        <Earning>
                          <BoltIcon />3
                        </Earning>
                        <Earning>
                          <RestIcon />1
                        </Earning>
                        <Earning>
                          <CashIcon />
                          10.9M
                        </Earning>
                      </Earnings>
                    </RewardsSection>
                  </Column>
                </Columns>
              </PanelContent>
            </Panel>
          </DialogBody>
        </Dialog>
      </Overlay>
    </Page>
  );
}
